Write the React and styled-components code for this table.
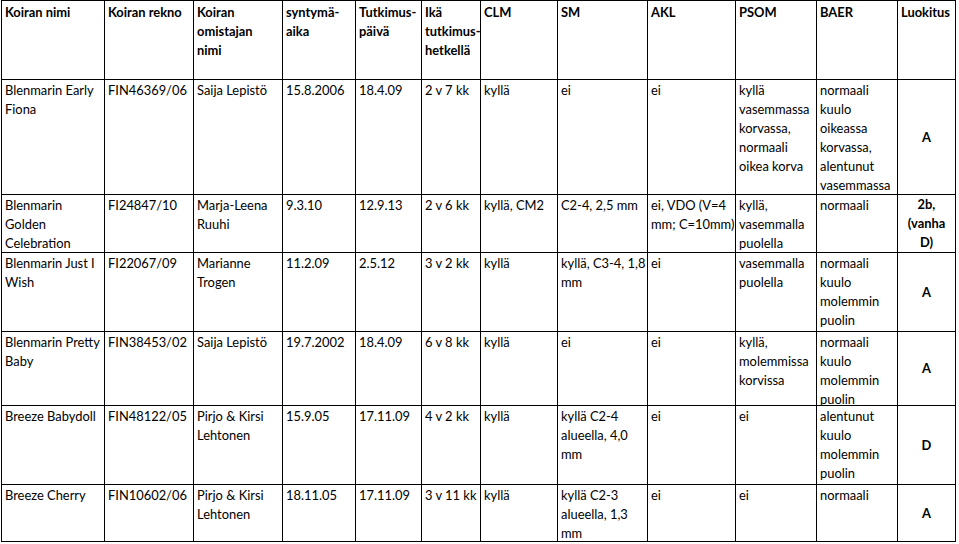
import React from 'react';
import styled, { createGlobalStyle } from 'styled-components';

const GlobalStyle = createGlobalStyle`
  html, body {
    margin: 0;
    padding: 0;
    background: #fff;
  }
  body {
    font-family: 'Lato', 'Liberation Sans', sans-serif;
    color: #000;
  }
`;

const COLUMNS = [103, 89, 89, 73, 66, 59, 77, 90, 88, 81, 81, 58];
const ROW_HEIGHTS = [79, 115, 58, 79, 74, 79, 57];

const Sheet = styled.div`
  display: grid;
  grid-template-columns: ${COLUMNS.map((w) => `${w}px`).join(' ')};
  grid-template-rows: ${ROW_HEIGHTS.map((h) => `${h}px`).join(' ')};
  width: max-content;
  margin-left: 1px;
  border-top: 1px solid #000;
  border-left: 1px solid #000;
`;

const Cell = styled.div`
  box-sizing: border-box;
  border-right: 1px solid #000;
  border-bottom: 1px solid #000;
  padding: ${({ $head }) => ($head ? '2px 2px 0 3px' : '1px 2px 0 3px')};
  font-size: 12.9px;
  line-height: 19px;
  font-weight: ${({ $head }) => ($head ? 700 : 400)};
  white-space: pre;
  overflow: visible;
`;

const GradeCell = styled(Cell)`
  display: flex;
  align-items: center;
  justify-content: center;
  text-align: center;
  padding: 0 2px;
  font-weight: 700;
`;

const headers = [
  'Koiran nimi',
  'Koiran rekno',
  'Koiran\nomistajan\nnimi',
  'syntymä-\naika',
  'Tutkimus-\npäivä',
  'Ikä\ntutkimus-\nhetkellä',
  'CLM',
  'SM',
  'AKL',
  'PSOM',
  'BAER',
  'Luokitus',
];

const dogs = [
  [
    'Blenmarin Early\nFiona',
    'FIN46369/06',
    'Saija Lepistö',
    '15.8.2006',
    '18.4.09',
    '2 v 7 kk',
    'kyllä',
    'ei',
    'ei',
    'kyllä\nvasemmassa\nkorvassa,\nnormaali\noikea korva',
    'normaali\nkuulo\noikeassa\nkorvassa,\nalentunut\nvasemmassa',
    'A',
  ],
  [
    'Blenmarin\nGolden\nCelebration',
    'FI24847/10',
    'Marja-Leena\nRuuhi',
    '9.3.10',
    '12.9.13',
    '2 v 6 kk',
    'kyllä, CM2',
    'C2-4, 2,5 mm',
    'ei, VDO (V=4\nmm; C=10mm)',
    'kyllä,\nvasemmalla\npuolella',
    'normaali',
    '2b,\n(vanha\nD)',
  ],
  [
    'Blenmarin Just I\nWish',
    'FI22067/09',
    'Marianne\nTrogen',
    '11.2.09',
    '2.5.12',
    '3 v 2 kk',
    'kyllä',
    'kyllä, C3-4, 1,8\nmm',
    'ei',
    'vasemmalla\npuolella',
    'normaali\nkuulo\nmolemmin\npuolin',
    'A',
  ],
  [
    'Blenmarin Pretty\nBaby',
    'FIN38453/02',
    'Saija Lepistö',
    '19.7.2002',
    '18.4.09',
    '6 v 8 kk',
    'kyllä',
    'ei',
    'ei',
    'kyllä,\nmolemmissa\nkorvissa',
    'normaali\nkuulo\nmolemmin\npuolin',
    'A',
  ],
  [
    'Breeze Babydoll',
    'FIN48122/05',
    'Pirjo & Kirsi\nLehtonen',
    '15.9.05',
    '17.11.09',
    '4 v 2 kk',
    'kyllä',
    'kyllä C2-4\nalueella, 4,0\nmm',
    'ei',
    'ei',
    'alentunut\nkuulo\nmolemmin\npuolin',
    'D',
  ],
  [
    'Breeze Cherry',
    'FIN10602/06',
    'Pirjo & Kirsi\nLehtonen',
    '18.11.05',
    '17.11.09',
    '3 v 11 kk',
    'kyllä',
    'kyllä C2-3\nalueella, 1,3\nmm',
    'ei',
    'ei',
    'normaali',
    'A',
  ],
];

const App = () => {
  return (
    <>
      <GlobalStyle />
      <Sheet>
        {headers.map((h) => (
          <Cell key={h} $head>
            {h}
          </Cell>
        ))}
        {dogs.map((row, r) =>
          row.map((value, c) =>
            c === row.length - 1 ? (
              <GradeCell key={`${r}-${c}`}>{value}</GradeCell>
            ) : (
              <Cell key={`${r}-${c}`}>{value}</Cell>
            )
          )
        )}
      </Sheet>
    </>
  );
};

export default App;
